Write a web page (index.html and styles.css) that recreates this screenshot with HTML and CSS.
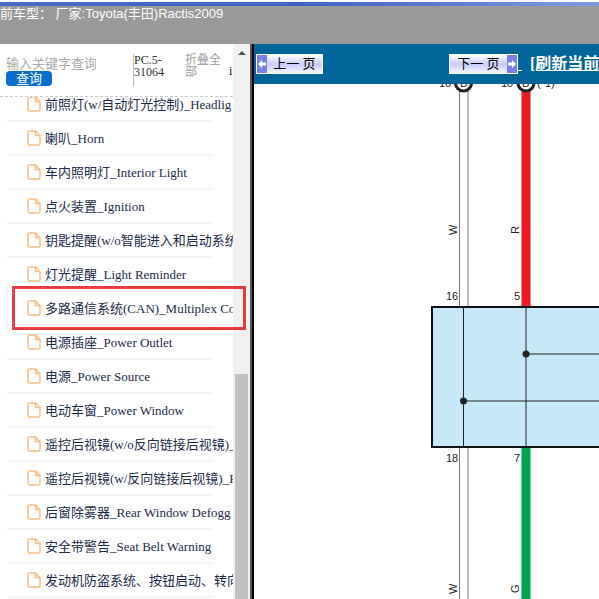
FILE: index.html
```
<!DOCTYPE html>
<html lang="zh-CN">
    <head>
        <meta charset="utf-8">
        <title>Toyota(丰田)Ractis2009</title>
        <link rel="stylesheet" href="styles.css">
    </head>
    <body>
        <!-- 文件图标 -->
        <svg class="defs" width="0" height="0">
            <symbol id="file" viewBox="0 0 14 16">
                <path d="M2 1H8.500l4.500 4.500v8q0 1.500-1.500 1.500h-9Q1 15 1 13.500V2Q1 1 2 1z M8.500 1v4.500H13" fill="none" stroke="#f7bf85" stroke-width="1.500"/>
            </symbol>
        </svg>

        <header class="header">前车型： 厂家:Toyota(丰田)Ractis2009</header>

        <div class="main">
            <aside class="sidebar">
                <div class="side-content">
                    <form class="search">
                        <div class="search-box">
                            <input type="text" placeholder="输入关键字查询" aria-label="输入关键字查询">
                            <button type="button">查询</button>
                        </div>
                        <span class="code">PC.5-31064</span>
                        <a class="fold" href="#">折叠全部</a>
                        <span class="info">i</span>
                    </form>
                    <div class="tree">
                        <ul>
                            <li><a href="#"><svg><use href="#file"/></svg>前照灯(w/自动灯光控制)_Headlig</a></li>
                            <li><a href="#"><svg><use href="#file"/></svg>喇叭_Horn</a></li>
                            <li><a href="#"><svg><use href="#file"/></svg>车内照明灯_Interior Light</a></li>
                            <li><a href="#"><svg><use href="#file"/></svg>点火装置_Ignition</a></li>
                            <li><a href="#"><svg><use href="#file"/></svg>钥匙提醒(w/o智能进入和启动系统</a></li>
                            <li><a href="#"><svg><use href="#file"/></svg>灯光提醒_Light Reminder</a></li>
                            <li><a href="#"><svg><use href="#file"/></svg>多路通信系统(CAN)_Multiplex Co</a></li>
                            <li><a href="#"><svg><use href="#file"/></svg>电源插座_Power Outlet</a></li>
                            <li><a href="#"><svg><use href="#file"/></svg>电源_Power Source</a></li>
                            <li><a href="#"><svg><use href="#file"/></svg>电动车窗_Power Window</a></li>
                            <li><a href="#"><svg><use href="#file"/></svg>遥控后视镜(w/o反向链接后视镜)_</a></li>
                            <li><a href="#"><svg><use href="#file"/></svg>遥控后视镜(w/反向链接后视镜)_R</a></li>
                            <li><a href="#"><svg><use href="#file"/></svg>后窗除雾器_Rear Window Defogg</a></li>
                            <li><a href="#"><svg><use href="#file"/></svg>安全带警告_Seat Belt Warning</a></li>
                            <li><a href="#"><svg><use href="#file"/></svg>发动机防盗系统、按钮启动、转向</a></li>
                        </ul>
                    </div>
                </div>
                <div class="scrollbar">
                    <span class="arrow"></span>
                    <span class="thumb"></span>
                </div>
                <div class="mark"></div>
            </aside>

            <section class="viewer">
                <nav class="toolbar">
                    <button type="button" class="page-btn prev">
                        <span class="dir"><svg width="10" height="10"><path d="M1 5l4-4v2.500h4v3H5V9z" fill="#fff"/></svg></span>
                        <span class="label">上一 页</span>
                    </button>
                    <button type="button" class="page-btn next">
                        <span class="label">下一 页</span>
                        <span class="dir"><svg width="10" height="10"><path d="M9 5L5 1v2.500H1v3h4V9z" fill="#fff"/></svg></span>
                    </button>
                    <a class="space" href="#">&nbsp;</a>
                    <a class="refresh" href="#">[刷新当前</a>
                </nav>

                <!-- 电路图 -->
                <svg class="diagram">
                    <!-- 插接器 -->
                    <text x="185" y="3">10</text>
                    <text x="247" y="3">10</text>
                    <text x="283" y="3">(*1)</text>

                    <!-- 上方导线 -->
                    <path d="M205.500 6V223M214 6V223" class="white"/>
                    <path d="M272 6V223" class="wire red"/>
                    <circle cx="209.500" cy="-1" r="8" class="plug"/>
                    <circle cx="272" cy="-1" r="8" class="plug"/>
                    <text x="206" y="3">B</text>
                    <text x="268" y="3">B</text>

                    <!-- 下方导线 -->
                    <path d="M205.500 363V2000M214 363V2000" class="white"/>
                    <path d="M272 363V2000" class="wire green"/>

                    <!-- 接线盒 -->
                    <rect x="178" y="223" width="2000" height="140" class="box"/>
                    <path d="M209.500 223V363M272 223V363M272 270H2000M209.500 317H2000" class="line"/>
                    <circle cx="272" cy="270" r="3.500"/>
                    <circle cx="209.500" cy="317" r="3.500"/>

                    <text x="192" y="216">16</text>
                    <text x="260" y="216">5</text>
                    <text x="192" y="378">18</text>
                    <text x="260" y="378">7</text>
                    <text transform="translate(203 151) rotate(-90)">W</text>
                    <text transform="translate(265 150) rotate(-90)">R</text>
                    <text transform="translate(203 510) rotate(-90)">W</text>
                    <text transform="translate(265 509) rotate(-90)">G</text>
                </svg>
            </section>
        </div>
    </body>
</html>
```
FILE: styles.css
```
*{
    margin:0;
    padding:0;
    box-sizing: border-box;
}
body{
    display: flex;
    flex-direction: column;
    height: 100vh;
    overflow: hidden;
    background-color: #fff;
    font-family: "Liberation Serif","Noto Sans CJK SC",serif;
    font-size: 13px;
}
a{
    color: inherit;
    text-decoration: none;
}
button{
    border: none;
    font-family: inherit;
    cursor: pointer;
}
.defs{
    position: absolute;
}

/*顶部*/
.header{
    flex: none;
    height: 42px;
    margin-top: 2px;
    border-top: 4px solid #4668c4;
    border-image: linear-gradient(to right,#4a6cc8,#4062c4 50%,#7f9be0) 1;
    background-color: #999;
    color: #fff;
    font: 13px/16px "Liberation Sans","Noto Sans CJK SC",sans-serif;
    white-space: pre;
}
.main{
    flex: 1;
    display: flex;
    min-height: 0;
}

/*左侧*/
.sidebar{
    flex: none;
    display: flex;
    position: relative;
    width: 254px;
    border-right: 2px solid #000;
    box-shadow: inset -2px 0 #555;
}
.side-content{
    display: flex;
    flex-direction: column;
    width: 233px;
    overflow: hidden;
}
.search{
    flex: none;
    display: flex;
    align-items: flex-start;
    height: 53px;
    padding: 10px 0 0 6px;
    border-bottom: 1px dashed #ccc;
    font-size: 12px;
    line-height: 12px;
}
.search-box{
    width: 90px;
    margin-right: 37px;
}
.search-box input{
    display: block;
    width: 100%;
    height: 17px;
    padding-top: 3px;
    border: none;
    outline: none;
    font-family: inherit;
    font-size: 13px;
}
.search-box input::placeholder{
    color: #aaa;
}
.search-box button{
    display: block;
    width: 46px;
    height: 15px;
    border-radius: 4px;
    background-color: #0a6fc8;
    color: #fff;
    font-size: 13px;
    line-height: 15px;
}
.code{
    width: 40px;
    height: 32px;
    border-left: 1px solid #bbb;
    color: #333;
}
.fold{
    width: 38px;
    margin-left: 12px;
    color: #999;
}
.info{
    margin: 11px 0 0 6px;
}
.tree{
    flex: 1;
    overflow: hidden;
}
.tree ul{
    margin: -9px 0 0 6px;
    list-style: none;
}
.tree li{
    width: 207px;
    height: 34px;
    border-bottom: 2px solid #f5f5f5;
}
.tree li a{
    display: flex;
    align-items: center;
    height: 30px;
    padding-left: 21px;
    color: #1c2b4a;
    white-space: nowrap;
}
.tree li svg{
    flex: none;
    width: 14px;
    height: 16px;
    margin: 2px 4px 0 0;
}
.scrollbar{
    display: flex;
    flex-direction: column;
    align-items: center;
    justify-content: space-between;
    width: 17px;
    padding-top: 7px;
    background-color: #f1f1f1;
}
.scrollbar .arrow{
    border: 4px solid transparent;
    border-top: none;
    border-bottom-color: #505050;
}
.scrollbar .thumb{
    width: 13px;
    height: 41%;
    background-color: #c1c1c1;
}
/*红框标注*/
.mark{
    position: absolute;
    left: 12px;
    top: 242px;
    width: 234px;
    height: 44px;
    border: 3px solid #e43d40;
}

/*右侧*/
.viewer{
    flex: 1;
    display: flex;
    flex-direction: column;
    min-width: 0;
    overflow: hidden;
}
.toolbar{
    flex: none;
    display: flex;
    align-items: center;
    height: 40px;
    padding-left: 2px;
    background-color: #069;
    white-space: nowrap;
}
.page-btn{
    flex: none;
    display: flex;
    width: 67px;
    height: 20px;
    border: 1px solid #fff;
    background-image: linear-gradient(#fff,#c8ccfa 50%,#f4f5ff);
    font-size: 13px;
    line-height: 18px;
}
.page-btn .label{
    flex: 1;
    text-align: center;
}
.page-btn .dir{
    display: flex;
    align-items: center;
    width: 10px;
    height: 18px;
    background-color: #7880ee;
}
.page-btn.next{
    width: 69px;
    margin-left: 126px;
}
.space,
.refresh{
    color: #fff;
    font-size: 16px;
    font-weight: bold;
    line-height: 24px;
    text-decoration: underline;
}
.refresh{
    margin-left: 8px;
}
.diagram{
    flex: 1;
    width: 100%;
    min-height: 0;
    fill: #222;
    font: 11px "Liberation Sans",sans-serif;
}
.diagram .white{
    stroke: #777;
}
.diagram .wire{
    stroke-width: 9px;
}
.diagram .red{
    stroke: #ed1c24;
}
.diagram .green{
    stroke: #00a54f;
}
.diagram .plug{
    fill: #fff;
    stroke: #222;
    stroke-width: 3px;
}
.diagram .box{
    fill: #c6e8f9;
    stroke: #111;
    stroke-width: 2px;
}
.diagram .line{
    fill: none;
    stroke: #222;
}
```
